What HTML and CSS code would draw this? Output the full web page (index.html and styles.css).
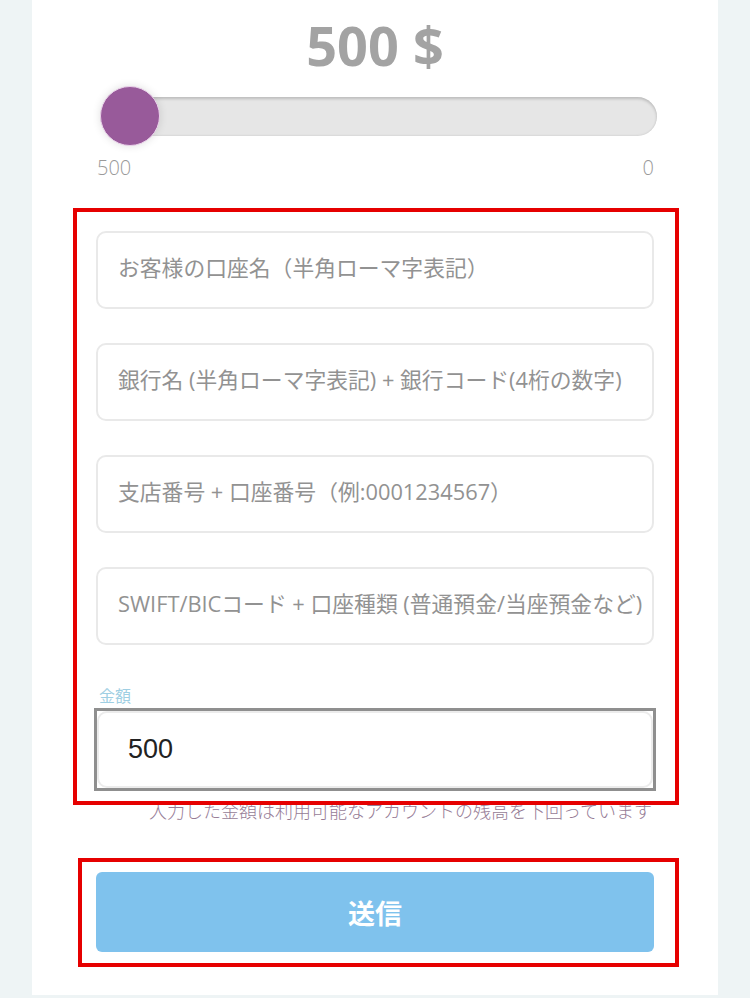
FILE: index.html
```html
<!DOCTYPE html>
<html lang="ja">
<head>
    <meta charset="UTF-8">
    <meta name="viewport" content="width=device-width, initial-scale=1.0">
    <title>出金</title>
    <link rel="stylesheet" href="styles.css">
</head>
<body>
    <div class="panel">
        <h1 class="amount-title">500 $</h1>

        <div class="slider">
            <div class="track"><span class="knob"></span></div>
        </div>
        <div class="range-labels">
            <span>500</span>
            <span>0</span>
        </div>

        <div class="mark mark-form">
            <div class="fields">
                <input class="field" type="text" placeholder="お客様の口座名（半角ローマ字表記）">
                <input class="field" type="text" placeholder="銀行名 (半角ローマ字表記) + 銀行コード(4桁の数字)">
                <input class="field" type="text" placeholder="支店番号 + 口座番号（例:0001234567）">
                <input class="field" type="text" placeholder="SWIFT/BICコード + 口座種類 (普通預金/当座預金など)">
            </div>
            <label class="amount-label" for="amount">金額</label>
            <div class="amount-box">
                <input class="amount-input" id="amount" type="text" value="500">
            </div>
        </div>
        <p class="hint">入力した金額は利用可能なアカウントの残高を下回っています</p>

        <div class="mark mark-btn">
            <button class="btn-send">送信</button>
        </div>
    </div>
</body>
</html>
```

FILE: styles.css
```css
body {
    margin: 0;
    background-color: #eef4f5;
    font-family: "Open Sans", "Noto Sans CJK JP", sans-serif;
}

.panel {
    margin: 0 32px;
    background-color: #fff;
    padding: 18px 64px 28px;
}

.amount-title {
    margin: 0;
    text-align: center;
    font-size: 54px;
    line-height: 54px;
    font-weight: 700;
    color: #a3a3a3;
}

/* slider */
.slider {
    height: 60px;
    display: flex;
    align-items: center;
    margin: 14px -3px 0 4px;
}

.track {
    flex: 1;
    height: 39px;
    border-radius: 20px;
    background-color: #e6e6e6;
    box-shadow: inset 0 2px 3px rgba(0,0,0,0.18), inset 0 -1px 2px rgba(0,0,0,0.06);
    display: flex;
    align-items: center;
}

.knob {
    width: 58px;
    height: 58px;
    flex-shrink: 0;
    border-radius: 50%;
    background-color: #985a9a;
    border: 1px solid #ead2ea;
    box-shadow: 0 0 8px rgba(0,0,0,0.12);
}

.range-labels {
    display: flex;
    justify-content: space-between;
    margin-top: 10px;
    padding-left: 1px;
    font-size: 20px;
    line-height: 24px;
    font-weight: 300;
    color: #9a9a9a;
}

/* red annotation boxes */
.mark {
    position: relative;
    z-index: 1;
    border: 4px solid #e60000;
}

.mark-form {
    margin: 28px -25px 0 -23px;
    padding: 19px 21px 10px 19px;
}

.mark-btn {
    margin: 36px -25px 0 -18px;
    padding: 10px 21px 11px 14px;
}

.fields {
    display: flex;
    flex-direction: column;
    gap: 34px;
}

.field {
    box-sizing: border-box;
    width: 100%;
    height: 78px;
    margin: 0;
    padding: 0 2px 6px 20px;
    border: 2px solid #e9e9e9;
    border-radius: 10px;
    background-color: #fff;
    font-family: "Open Sans", "Noto Sans CJK JP", sans-serif;
    font-size: 21.8px;
    color: #333;
    outline: none;
}

.field::placeholder {
    color: #929292;
    opacity: 1;
}

.amount-label {
    display: block;
    margin-top: 40px;
    padding-left: 3px;
    font-family: "Noto Sans CJK JP", sans-serif;
    font-size: 16px;
    line-height: 20px;
    color: #9fcfe3;
}

.amount-box {
    margin: 3px -2px 0 -2px;
    border: 3px solid #8f8f8f;
}

.amount-input {
    box-sizing: border-box;
    display: block;
    width: 100%;
    height: 77px;
    margin: 0;
    padding: 0 10px 0 29px;
    border: 2px solid #ececec;
    border-radius: 10px;
    font-family: "Liberation Sans", Arial, sans-serif;
    font-size: 27px;
    color: #222;
    outline: none;
}

.hint {
    margin: -7px 2px 0 0;
    text-align: right;
    font-family: "Noto Sans CJK JP", sans-serif;
    font-size: 18px;
    line-height: 24px;
    font-weight: 300;
    color: #967c96;
}

.btn-send {
    display: block;
    width: 100%;
    height: 80px;
    border: none;
    border-radius: 6px;
    background-color: #7fc2ed;
    color: #fff;
    font-family: "Noto Sans CJK JP", sans-serif;
    font-size: 27px;
    font-weight: 700;
    cursor: pointer;
}
```
